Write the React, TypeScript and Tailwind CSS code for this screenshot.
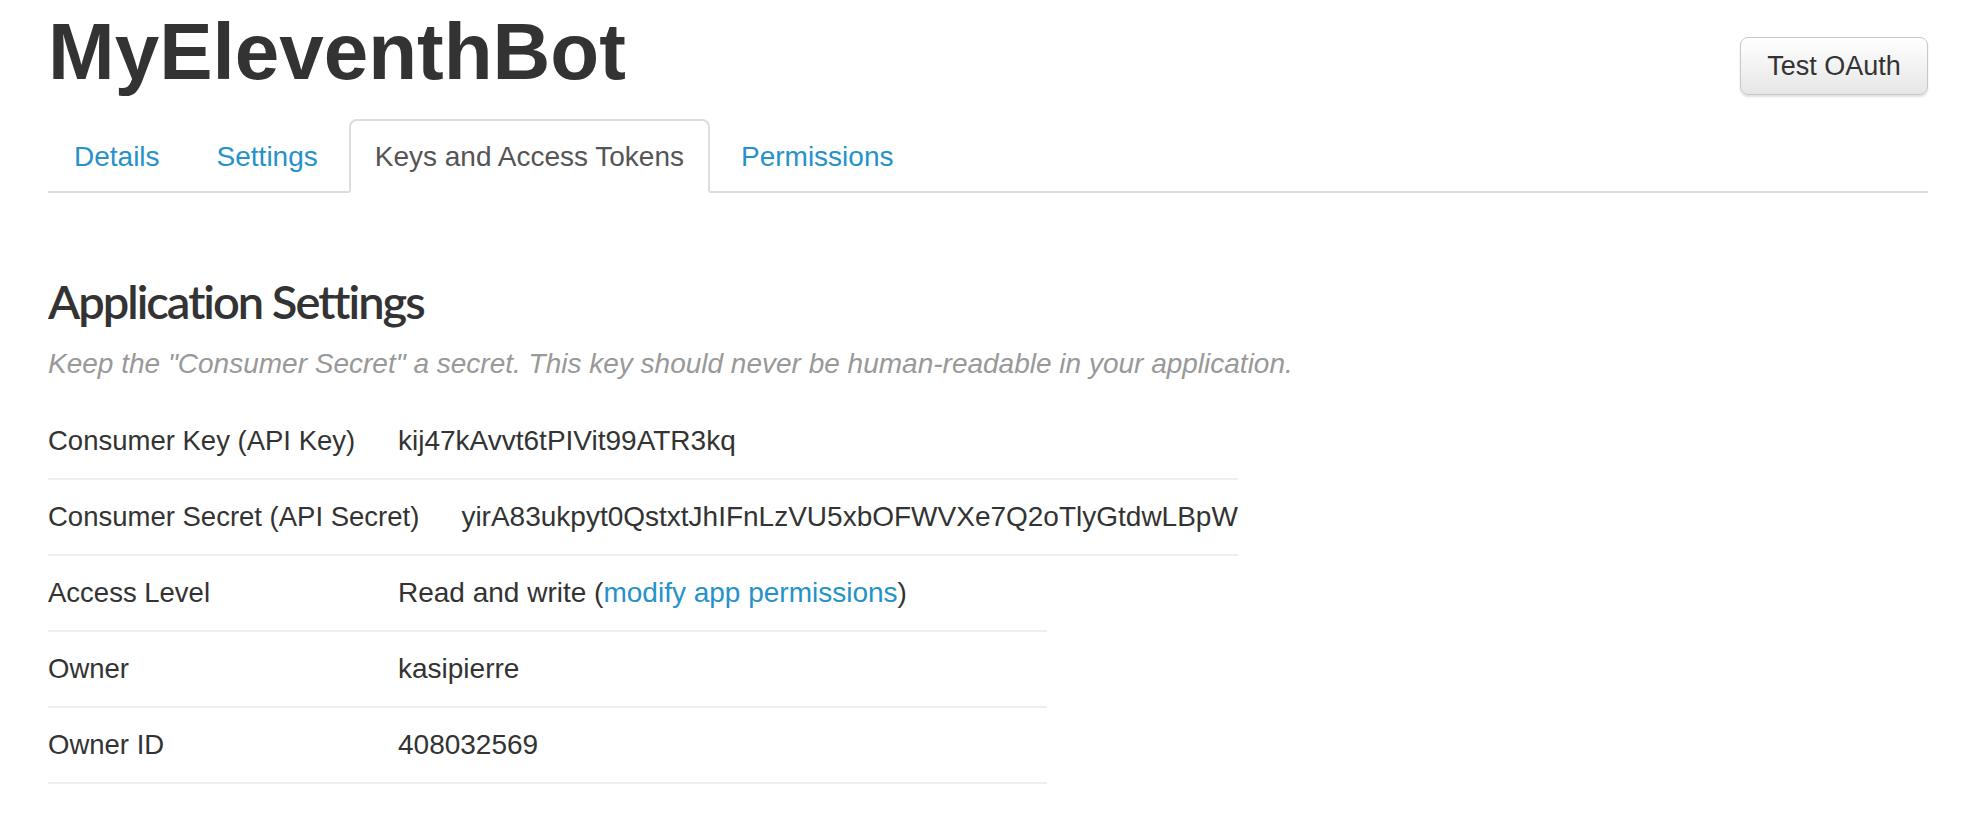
import React from 'react';

interface Row {
  label: string;
  value: React.ReactNode;
}

const tabs = [
  { name: 'Details', active: false },
  { name: 'Settings', active: false },
  { name: 'Keys and Access Tokens', active: true },
  { name: 'Permissions', active: false },
];

const keyRows: Row[] = [
  { label: 'Consumer Key (API Key)', value: 'kij47kAvvt6tPIVit99ATR3kq' },
  { label: 'Consumer Secret (API Secret)', value: 'yirA83ukpyt0QstxtJhIFnLzVU5xbOFWVXe7Q2oTlyGtdwLBpW' },
];

const appRows: Row[] = [
  {
    label: 'Access Level',
    value: (
      <>
        Read and write (<a href="#" className="text-[#2592c9]">modify app permissions</a>)
      </>
    ),
  },
  { label: 'Owner', value: 'kasipierre' },
  { label: 'Owner ID', value: '408032569' },
];

const RowGroup: React.FC<{ rows: Row[] }> = ({ rows }) => (
  <div className="w-fit min-w-[999px]">
    {rows.map((r) => (
      <div key={r.label} className="flex h-[76px] items-center border-b-2 border-[#eeeeee] whitespace-nowrap">
        <span className="min-w-[350px] shrink-0 pr-[42px] text-[27.5px]">{r.label}</span>
        <span className="text-[28px]">{r.value}</span>
      </div>
    ))}
  </div>
);

const App: React.FC = () => {
  return (
    <div className="min-h-screen bg-white pl-[48px] pr-[36px] font-['Liberation_Sans',Arial,sans-serif] text-[#333333]">
      <div className="flex items-start justify-between">
        <h1 className="pt-[12px] text-[80px] font-bold leading-none text-[#333333]">MyEleventhBot</h1>
        <button
          type="button"
          className="mt-[37px] h-[58px] w-[188px] rounded-[8px] border border-[#c8c8c8] bg-linear-to-b from-white to-[#e6e6e6] text-[27px] text-[#333333] shadow-[0_2px_2px_rgba(0,0,0,0.12)]"
        >
          Test OAuth
        </button>
      </div>

      <ul className="mt-[24px] flex border-b-2 border-[#dddddd]">
        {tabs.map((t) => (
          <li key={t.name} className="-mb-[2px] mr-[5px]">
            <a
              href="#"
              className={
                t.active
                  ? 'block rounded-t-[8px] border-2 border-[#dddddd] border-b-white bg-white px-[24px] pt-[16px] pb-[14px] text-[28px] leading-[40px] text-[#555555]'
                  : 'block rounded-t-[8px] border-2 border-transparent px-[24px] pt-[16px] pb-[14px] text-[28px] leading-[40px] text-[#2592c9]'
              }
            >
              {t.name}
            </a>
          </li>
        ))}
      </ul>

      <h2 className="mt-[85px] font-['Lato','Liberation_Sans',sans-serif] text-[47px] font-semibold leading-none tracking-[-2px] text-[#333333]">
        Application Settings
      </h2>
      <p className="mt-[19px] text-[28px] italic leading-[40px] text-[#999999]">
        Keep the "Consumer Secret" a secret. This key should never be human-readable in your application.
      </p>

      <div className="mt-[20px]">
        <RowGroup rows={keyRows} />
        <RowGroup rows={appRows} />
      </div>
    </div>
  );
};

export default App;
